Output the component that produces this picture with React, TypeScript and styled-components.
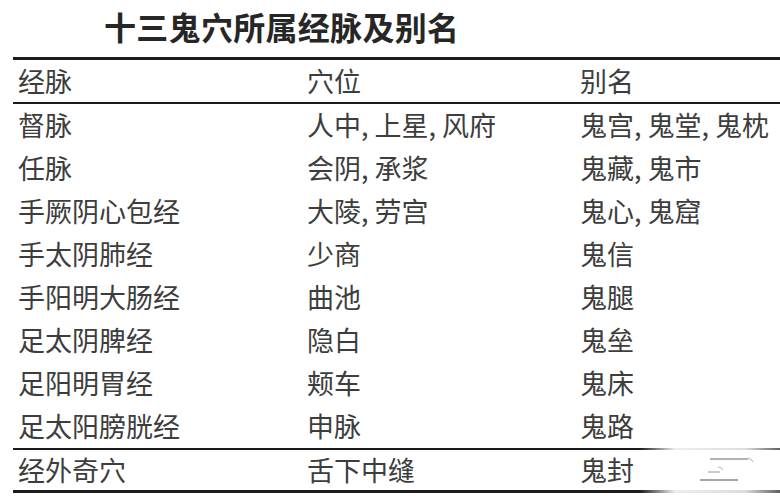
import React from "react";
import styled, { createGlobalStyle } from "styled-components";

const GlobalStyle = createGlobalStyle`
  html, body {
    margin: 0;
    padding: 0;
    background: #ffffff;
  }
  body {
    font-family: "Noto Sans CJK SC", "Noto Sans", sans-serif;
    color: #3a3a3a;
  }
`;

const Page = styled.div`
  position: relative;
  width: 780px;
  height: 501px;
  overflow: hidden;
  background: #fff;
`;

const Title = styled.div`
  height: 57px;
  padding-left: 104px;
  font-size: 32px;
  line-height: 52px;
  font-weight: 700;
  color: #262626;
  letter-spacing: 0.3px;
`;

const Table = styled.table`
  margin-left: 13px;
  width: 767px;
  border-collapse: collapse;
  table-layout: fixed;
`;

const Row = styled.tr<{ $height: number; $top?: number; $bottom?: number }>`
  height: ${(p) => p.$height}px;
  border-top: ${(p) => (p.$top ? `${p.$top}px solid #1c1c1c` : "none")};
  border-bottom: ${(p) => (p.$bottom ? `${p.$bottom}px solid #1c1c1c` : "none")};
`;

const Cell = styled.td`
  padding: 0 0 0 5px;
  font-size: 27px;
  line-height: 1;
  font-weight: 400;
  color: #3d3d3d;
  white-space: nowrap;
  vertical-align: middle;
`;

const Watermark = styled.div`
  position: absolute;
  left: 640px;
  top: 436px;
  width: 140px;
  height: 65px;
  background: linear-gradient(
    90deg,
    rgba(255, 255, 255, 0) 0%,
    rgba(255, 255, 255, 0.92) 25%,
    rgba(255, 255, 255, 0.85) 75%,
    rgba(255, 255, 255, 0.3) 100%
  );
  display: flex;
  align-items: center;
  justify-content: center;
`;

const rows: [string, string, string][] = [
  ["督脉", "人中, 上星, 风府", "鬼宫, 鬼堂, 鬼枕"],
  ["任脉", "会阴, 承浆", "鬼藏, 鬼市"],
  ["手厥阴心包经", "大陵, 劳宫", "鬼心, 鬼窟"],
  ["手太阴肺经", "少商", "鬼信"],
  ["手阳明大肠经", "曲池", "鬼腿"],
  ["足太阴脾经", "隐白", "鬼垒"],
  ["足阳明胃经", "颊车", "鬼床"],
  ["足太阳膀胱经", "申脉", "鬼路"],
];

export default function App() {
  return (
    <>
      <GlobalStyle />
      <Page>
        <Title>十三鬼穴所属经脉及别名</Title>
        <Table>
          <colgroup>
            <col style={{ width: 289 }} />
            <col style={{ width: 273 }} />
            <col />
          </colgroup>
          <tbody>
            <Row $height={44} $top={3} $bottom={2}>
              <Cell>经脉</Cell>
              <Cell>穴位</Cell>
              <Cell>别名</Cell>
            </Row>
            {rows.map(([a, b, c], i) => (
              <Row key={a} $height={i === rows.length - 1 ? 45 : 43} $bottom={i === rows.length - 1 ? 2 : 0}>
                <Cell>{a}</Cell>
                <Cell>{b}</Cell>
                <Cell>{c}</Cell>
              </Row>
            ))}
            <Row $height={43} $bottom={3}>
              <Cell>经外奇穴</Cell>
              <Cell>舌下中缝</Cell>
              <Cell>鬼封</Cell>
            </Row>
          </tbody>
        </Table>
        <Watermark>
          <svg width="100" height="40" viewBox="0 0 100 40">
            <line x1="50" y1="10" x2="88" y2="10" stroke="#9a9a9a" strokeWidth="1.5" />
            <path d="M88 9 q4 1 5 4" stroke="#b0b0b0" strokeWidth="1" fill="none" />
            <line x1="48" y1="23" x2="60" y2="23" stroke="#a8a8a8" strokeWidth="1.2" />
            <path d="M58 18 q4 0 5 3" stroke="#b8b8b8" strokeWidth="1" fill="none" />
            <line x1="40" y1="31" x2="78" y2="31" stroke="#8a8a8a" strokeWidth="1.6" />
          </svg>
        </Watermark>
      </Page>
    </>
  );
}
